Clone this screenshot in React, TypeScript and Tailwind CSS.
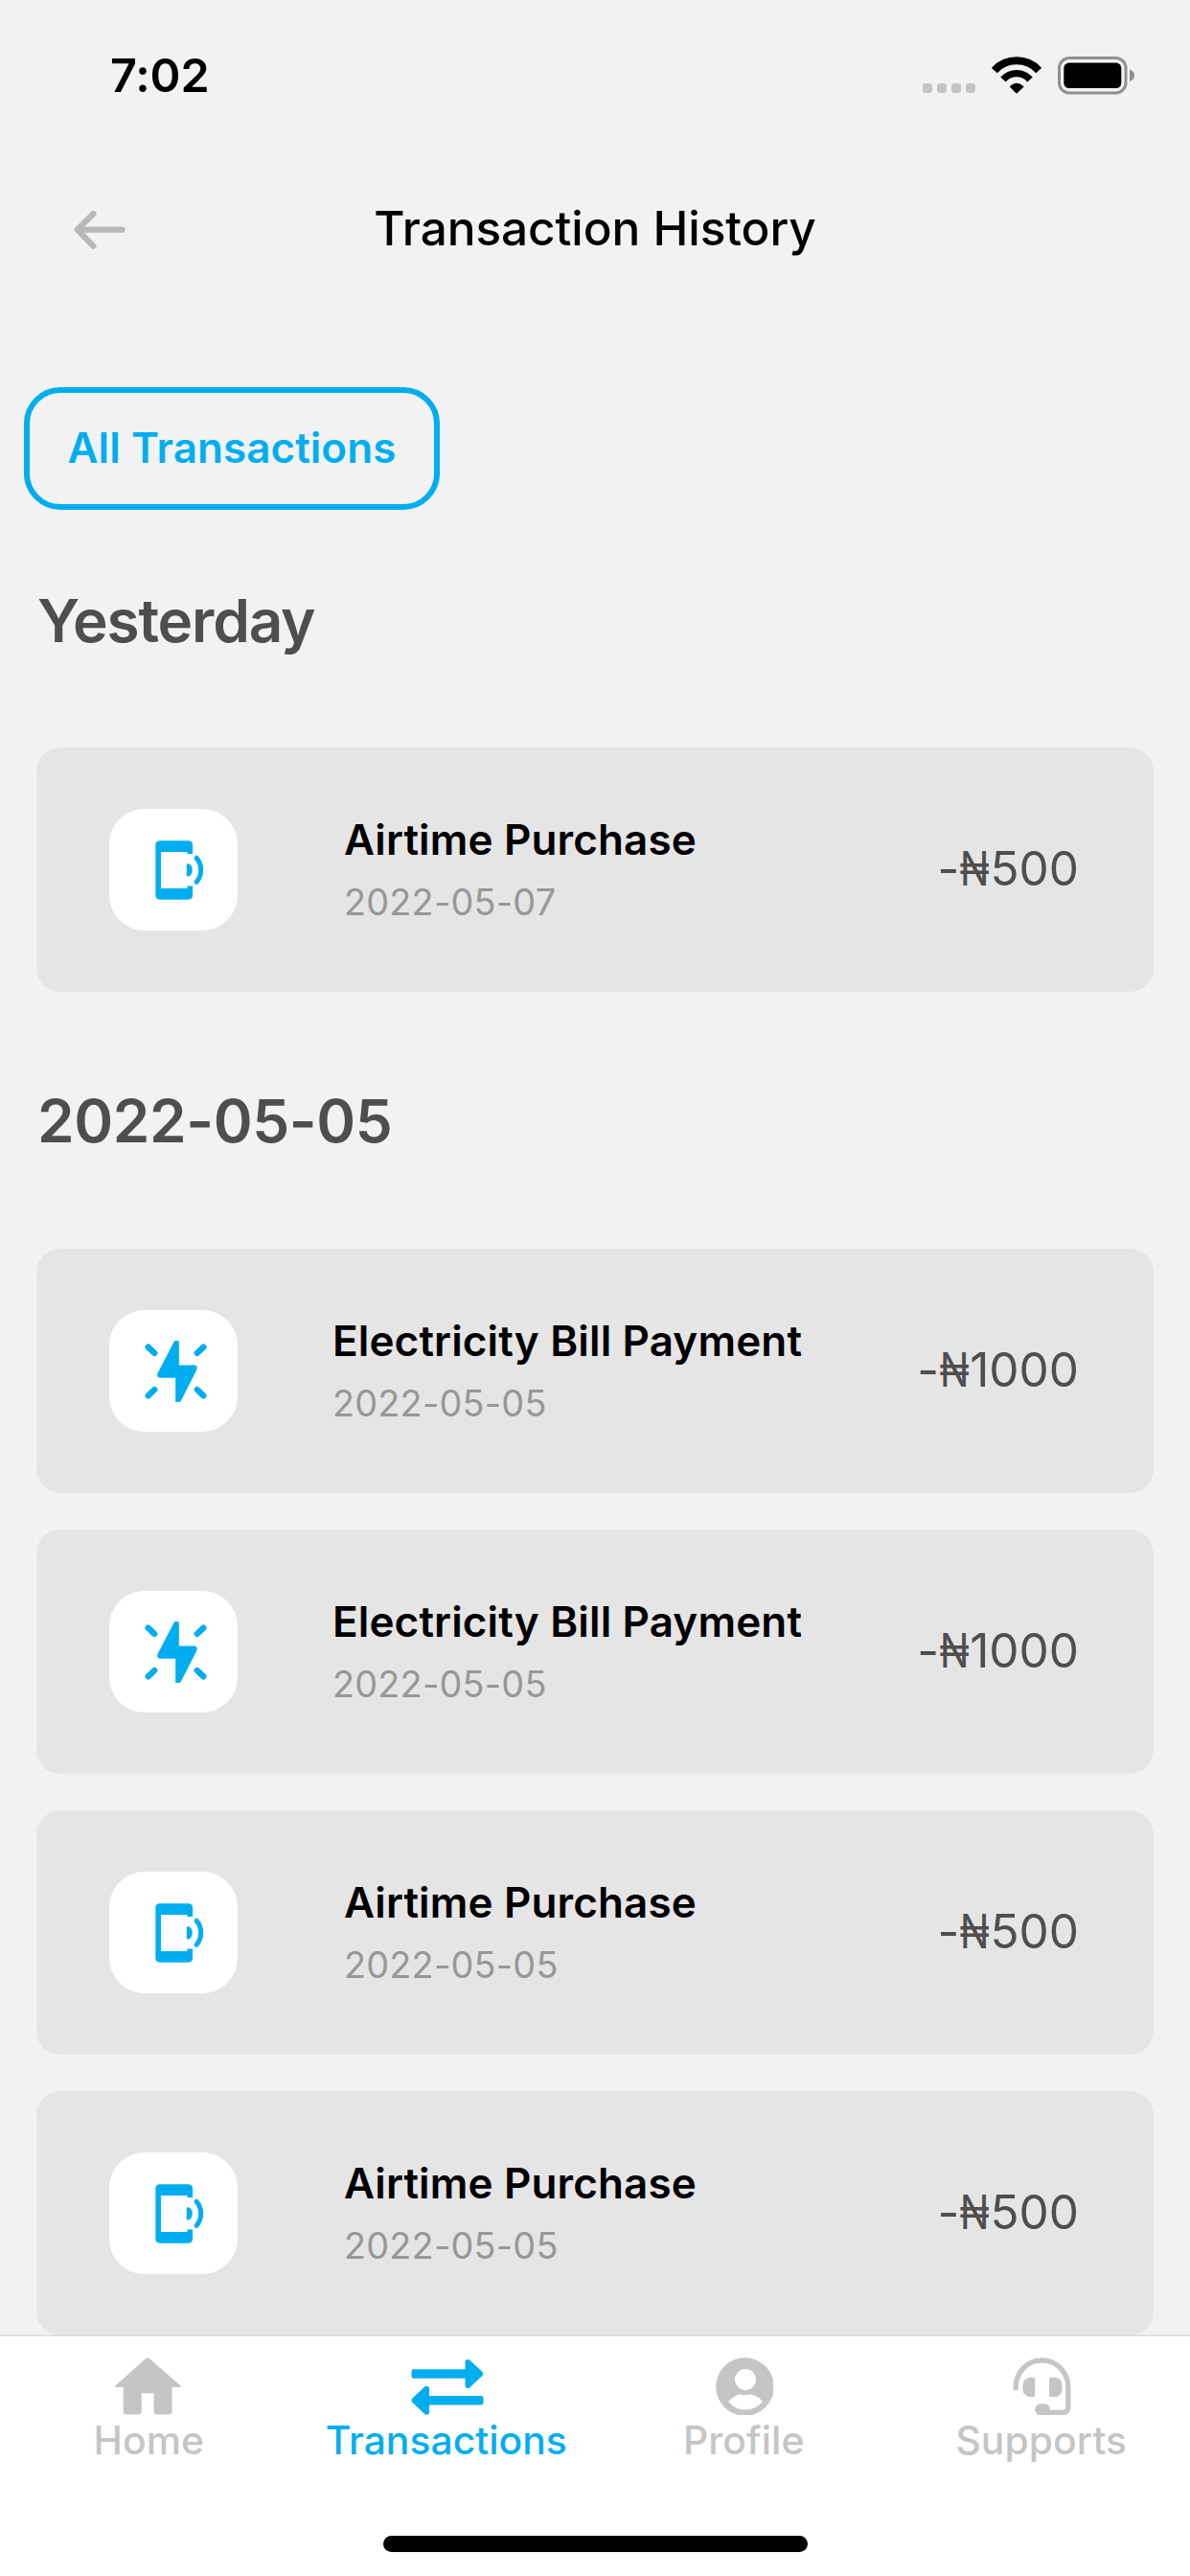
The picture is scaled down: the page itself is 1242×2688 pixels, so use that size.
import type { ReactNode } from "react";

type Kind = "airtime" | "electricity";

interface Transaction {
  kind: Kind;
  title: string;
  date: string;
  amount: string;
}

const yesterday: Transaction[] = [
  { kind: "airtime", title: "Airtime Purchase", date: "2022-05-07", amount: "500" },
];

const earlier: Transaction[] = [
  { kind: "electricity", title: "Electricity Bill Payment", date: "2022-05-05", amount: "1000" },
  { kind: "electricity", title: "Electricity Bill Payment", date: "2022-05-05", amount: "1000" },
  { kind: "airtime", title: "Airtime Purchase", date: "2022-05-05", amount: "500" },
  { kind: "airtime", title: "Airtime Purchase", date: "2022-05-05", amount: "500" },
];

function StatusBar() {
  return (
    <div className="flex h-[158px] shrink-0 items-center justify-between pr-[57px] pl-[115px]">
      <span className="text-[48.5px] font-semibold tracking-[-0.12px] text-black">7:02</span>
      <div className="flex items-center">
        <div className="mt-[26px] flex gap-[5px]">
          <i className="size-[10px] rounded-[3px] bg-[#c4c4c4]" />
          <i className="size-[10px] rounded-[3px] bg-[#c4c4c4]" />
          <i className="size-[10px] rounded-[3px] bg-[#c4c4c4]" />
          <i className="size-[10px] rounded-[3px] bg-[#c4c4c4]" />
        </div>
        <svg viewBox="283 54 156 117" className="-mt-[2px] ml-[17px] h-[39px] w-[52px]" fill="none">
          <path d="M291.5 97.5A94.4 94.4 0 0 1 430.5 97.5" stroke="#000" strokeWidth="24" />
          <path d="M319 126A56 56 0 0 1 403 126" stroke="#000" strokeWidth="22" />
          <path d="M361 170L339 148.500Q361 126 384 148.500Z" fill="#000" />
        </svg>
        <svg viewBox="0 0 81 40" className="-mt-[1px] ml-[17px] h-[40px] w-[81px]">
          <rect x="1.500" y="1.500" width="69.500" height="36.500" rx="10.500" fill="none" stroke="#909090" strokeWidth="3" />
          <rect x="6.300" y="6.600" width="60" height="26.400" rx="5.500" fill="#000" />
          <path d="M75 13.500Q80 15.500 80 19.700T75 26Z" fill="#8e8e8e" />
        </svg>
      </div>
    </div>
  );
}

function Header() {
  return (
    <header className="grid h-[160px] shrink-0 grid-cols-[1fr_auto_1fr] items-center">
      <svg viewBox="0 0 56 42" className="mt-[3px] ml-[76px] h-[42px] w-[56px]" fill="none" stroke="#b8b8b8" strokeWidth="6.200" strokeLinecap="round" strokeLinejoin="round">
        <path d="M51.500 20.700H5M21.500 4L4.700 20.700L21.500 37.800" />
      </svg>
      <h1 className="text-[49.5px] font-medium tracking-[-0.06px] text-black">Transaction History</h1>
    </header>
  );
}

function AirtimeIcon() {
  return (
    <svg viewBox="37 35 154 187" className="ml-[13px] h-[62px] w-[51px]" fill="#00aef0">
      <path d="M52 36H141Q155 36 155 50V77H138V71H55V186H138V178H155V207Q155 221 141 221H52Q38 221 38 207V50Q38 36 52 36Z" />
      <path d="M141 107Q154 112 154 128T141 149Q134 147 136 139V117Q134 109 141 107Z" />
      <path d="M167 90Q181 106 181 128T167 166" fill="none" stroke="#00aef0" strokeWidth="15" strokeLinecap="round" />
    </svg>
  );
}

function ElectricityIcon() {
  return (
    <svg viewBox="154 173 194 193" className="ml-[5px] h-[64px] w-[65px]" fill="#00aef0">
      <path d="M249 173H257Q261 173 261 178V250H311Q320 252 317 264L267 362Q265 366 260 366H250V290H201Q191 288 193 277L245 177Q247 173 249 173Z" />
      <path d="M164 193L184 212M338 193L318 212M164 346L184 327M338 346L318 327" fill="none" stroke="#00aef0" strokeWidth="19" strokeLinecap="round" />
    </svg>
  );
}

function TransactionCard({ item }: { item: Transaction }) {
  const airtime = item.kind === "airtime";
  return (
    <article className="flex h-[255px] shrink-0 items-center rounded-[25px] bg-[#e5e5e5] pr-[78px] pl-[76px]">
      <div className="flex h-[127px] w-[134px] shrink-0 items-center justify-center rounded-[37px] bg-white">
        {airtime ? <AirtimeIcon /> : <ElectricityIcon />}
      </div>
      <div className={airtime ? "mt-[3px] ml-[111px]" : "mt-[3px] ml-[99px]"}>
        <h3 className="text-[44px] leading-[65px] font-semibold tracking-[0.15px] text-black">{item.title}</h3>
        <p className="text-[37.8px] leading-[65px] tracking-[0.22px] text-[#979797]">{item.date}</p>
      </div>
      <p className="mb-[3px] ml-auto text-[49.5px] leading-[60px] text-[#4e4e4e]">
        -<span className="-mx-[3px] inline-block scale-x-[0.82]">₦</span>
        {item.amount}
      </p>
    </article>
  );
}

function HomeIcon() {
  return (
    <svg viewBox="0 0 69 60" className="mr-[2px] h-[60px] w-[69px]" fill="#c5c5c5">
      <path d="M32 1.200Q34 -.600 36 1.200L68 29Q69.500 31 67 31H59.500V56Q59.500 59.500 56 59.500H44Q40.500 59.500 40.500 56V37.300H27.700V56Q27.700 59.500 24.200 59.500H12.200Q8.700 59.500 8.700 56V31H1Q-1 31 .800 29Z" />
    </svg>
  );
}

function TransactionsIcon() {
  return (
    <svg viewBox="0 0 76 60" className="ml-[2px] h-[60px] w-[76px]" fill="#00aef0">
      <path d="M3 12.300H56.500V4Q57.500 1 61 2.500L74.500 15Q76 17 74.500 19L61 31.500Q57.500 33 56.500 30V21.700H3Q.500 21.700 .500 18.700V15.300Q.500 12.300 3 12.300Z" />
      <path d="M73 40H19V31.700Q18 28.700 14.500 30.200L1.200 42.700Q-.300 44.700 1.200 46.700L14.500 59.200Q18 61 19 57.700V49.400H73Q75.500 49.400 75.500 46.400V43Q75.500 40 73 40Z" />
    </svg>
  );
}

function ProfileIcon() {
  return (
    <svg viewBox="0 0 60 60" className="ml-[1px] size-[60px]">
      <circle cx="30.500" cy="30.500" r="30.300" fill="#c5c5c5" />
      <circle cx="31" cy="23" r="11" fill="#fff" />
      <path d="M13.300 46Q18 40 25 38.200Q31 40.500 37 38.200Q44 40 49 46Q42 54.500 31 54.500T13.300 46Z" fill="#fff" />
    </svg>
  );
}

function SupportsIcon() {
  return (
    <svg viewBox="51 28 184 182" className="ml-[1px] h-[60px] w-[61px]" fill="#c5c5c5">
      <path d="M60 132V122A83 85 0 0 1 226 122V186Q226 202 209 202H150" fill="none" stroke="#c5c5c5" strokeWidth="16" />
      <path d="M115 91Q121 91 121 97V147Q121 153 115 153H105Q82 150 82 126V118Q82 94 105 91Z" />
      <path d="M172 91Q166 91 166 97V147Q166 153 172 153H184Q207 150 207 126V118Q207 94 184 91Z" />
      <rect x="121" y="174" width="48" height="38" rx="19" />
    </svg>
  );
}

function Tab({ label, active, children }: { label: string; active?: boolean; children: ReactNode }) {
  return (
    <button className="flex flex-col items-center pt-[22px]">
      {children}
      <span
        className={
          active
            ? "text-[40.8px] leading-[52px] font-medium tracking-[0.05px] text-[#00aef0]"
            : "text-[40.8px] leading-[52px] font-medium tracking-[0.1px] text-[#c5c5c5]"
        }
      >
        {label}
      </span>
    </button>
  );
}

export default function App() {
  return (
    <div className="flex h-[2688px] w-[1242px] flex-col overflow-hidden bg-[#f2f2f2] font-['Inter',sans-serif]">
      <StatusBar />
      <Header />
      <main className="flex min-h-0 flex-1 flex-col overflow-hidden">
        <button className="mt-[86px] ml-[25px] flex h-[128px] w-[434px] shrink-0 items-center justify-center rounded-[38px] border-[6.5px] border-[#00aef0] pb-[2px] text-[44px] font-semibold tracking-[0.06px] text-[#00aef0]">
          All Transactions
        </button>
        <section className="flex shrink-0 flex-col px-[38px]">
          <h2 className="mb-[17px] flex h-[231px] items-center pl-[1px] text-[62px] font-semibold tracking-[-1.15px] text-[#4e4e4e]">
            Yesterday
          </h2>
          {yesterday.map((item, i) => (
            <TransactionCard key={i} item={item} />
          ))}
        </section>
        <section className="flex shrink-0 flex-col px-[38px]">
          <h2 className="flex h-[268px] items-center pl-[1px] text-[62px] font-semibold tracking-[-0.4px] text-[#4e4e4e]">
            2022-05-05
          </h2>
          <div className="flex flex-col gap-[38px]">
            {earlier.map((item, i) => (
              <TransactionCard key={i} item={item} />
            ))}
          </div>
        </section>
      </main>
      <footer className="flex h-[252px] shrink-0 flex-col items-center justify-between border-t-2 border-[#dfdfdf] bg-white pb-[25px]">
        <nav className="grid w-full grid-cols-4">
          <Tab label="Home">
            <HomeIcon />
          </Tab>
          <Tab label="Transactions" active>
            <TransactionsIcon />
          </Tab>
          <Tab label="Profile">
            <ProfileIcon />
          </Tab>
          <Tab label="Supports">
            <SupportsIcon />
          </Tab>
        </nav>
        <div className="h-[17px] w-[443px] rounded-full bg-black" />
      </footer>
    </div>
  );
}
